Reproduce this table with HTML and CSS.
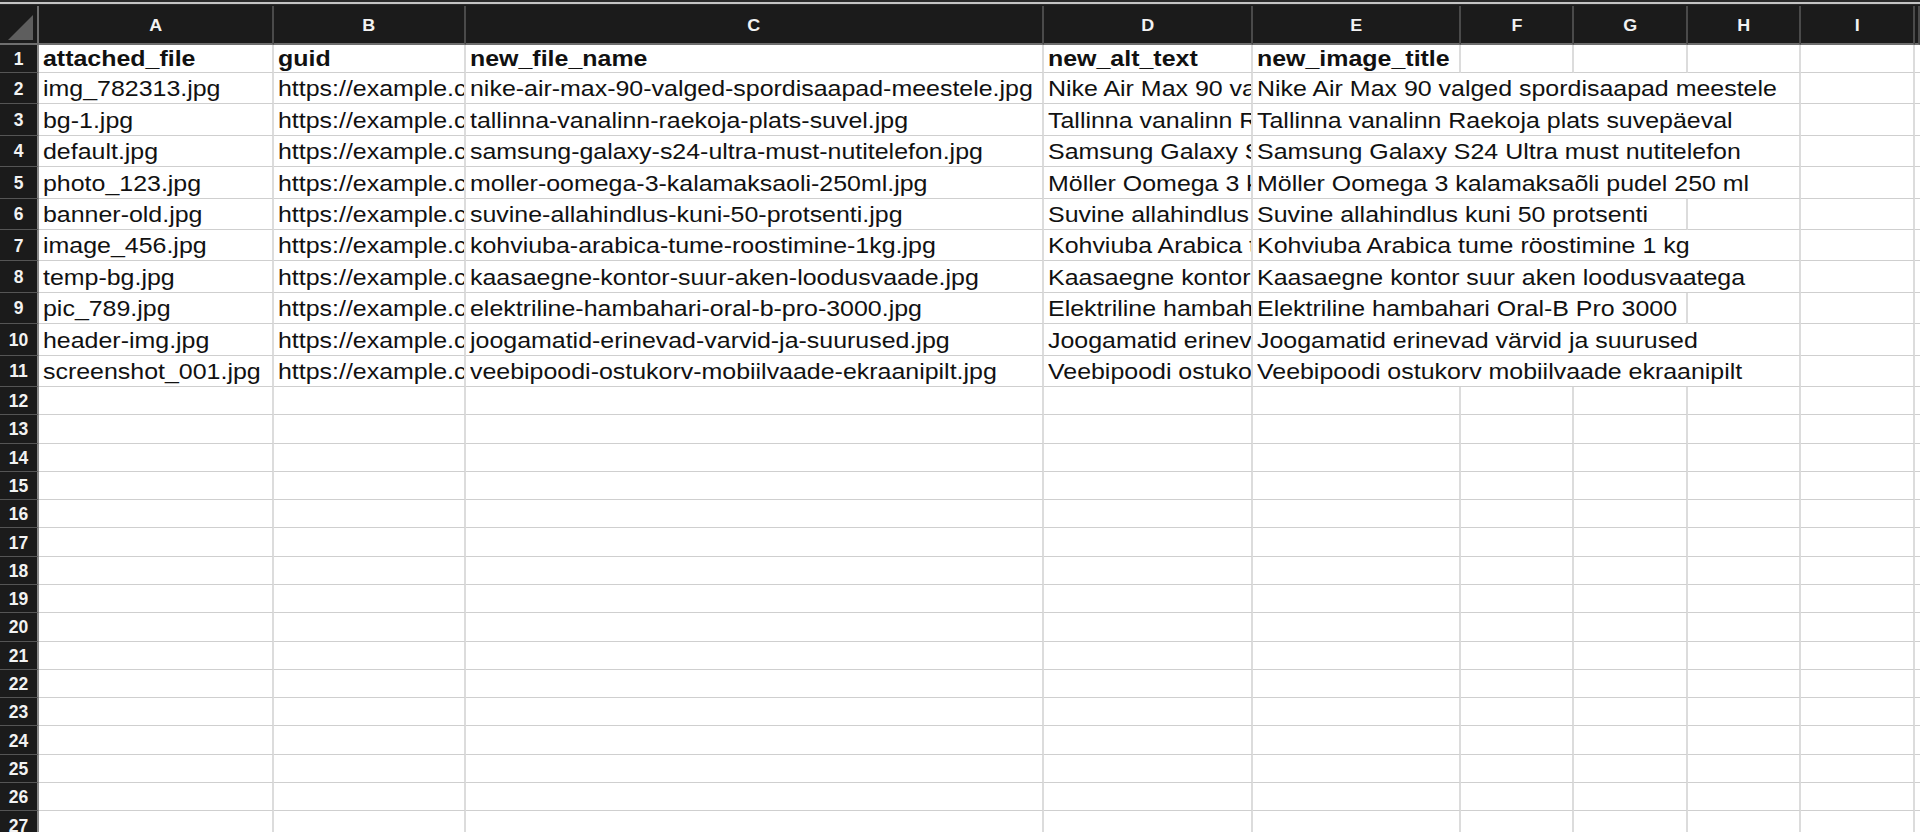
FILE: index.html
```html
<!DOCTYPE html>
<html lang="et">
<head>
<meta charset="utf-8">
<title>Sheet</title>
<link rel="stylesheet" href="styles.css">
</head>
<body>
<div class="sheet">
  <div class="topbar"></div>

  <div class="row head">
    <div class="corner"></div>
    <div class="ch"><span class="l">A</span></div>
    <div class="ch"><span class="l">B</span></div>
    <div class="ch"><span class="l">C</span></div>
    <div class="ch"><span class="l">D</span></div>
    <div class="ch"><span class="l">E</span></div>
    <div class="ch"><span class="l">F</span></div>
    <div class="ch"><span class="l">G</span></div>
    <div class="ch"><span class="l">H</span></div>
    <div class="ch"><span class="l">I</span></div>
    <div class="ch"></div>
  </div>

  <div class="row r1 bold">
    <div class="rn">1</div>
    <div class="c"><span class="t">attached_file</span></div>
    <div class="c"><span class="t">guid</span></div>
    <div class="c"><span class="t">new_file_name</span></div>
    <div class="c"><span class="t">new_alt_text</span></div>
    <div class="c"><span class="t">new_image_title</span></div>
    <div class="c"></div><div class="c"></div><div class="c"></div><div class="c"></div><div class="c"></div>
  </div>

  <div class="row rd">
    <div class="rn">2</div>
    <div class="c"><span class="t">img_782313.jpg</span></div>
    <div class="c"><span class="t">https://example.com/img_782313.jpg</span></div>
    <div class="c"><span class="t">nike-air-max-90-valged-spordisaapad-meestele.jpg</span></div>
    <div class="c"><span class="t">Nike Air Max 90 valged spordisaapad meestele</span></div>
    <div class="c span4"><span class="t">Nike Air Max 90 valged spordisaapad meestele</span></div>
    <div class="c"></div><div class="c"></div>
  </div>

  <div class="row rd">
    <div class="rn">3</div>
    <div class="c"><span class="t">bg-1.jpg</span></div>
    <div class="c"><span class="t">https://example.com/bg-1.jpg</span></div>
    <div class="c"><span class="t">tallinna-vanalinn-raekoja-plats-suvel.jpg</span></div>
    <div class="c"><span class="t">Tallinna vanalinn Raekoja plats suvepäeval</span></div>
    <div class="c span4"><span class="t">Tallinna vanalinn Raekoja plats suvepäeval</span></div>
    <div class="c"></div><div class="c"></div>
  </div>

  <div class="row rd">
    <div class="rn">4</div>
    <div class="c"><span class="t">default.jpg</span></div>
    <div class="c"><span class="t">https://example.com/default.jpg</span></div>
    <div class="c"><span class="t">samsung-galaxy-s24-ultra-must-nutitelefon.jpg</span></div>
    <div class="c"><span class="t">Samsung Galaxy S24 Ultra must nutitelefon</span></div>
    <div class="c span4"><span class="t">Samsung Galaxy S24 Ultra must nutitelefon</span></div>
    <div class="c"></div><div class="c"></div>
  </div>

  <div class="row rd">
    <div class="rn">5</div>
    <div class="c"><span class="t">photo_123.jpg</span></div>
    <div class="c"><span class="t">https://example.com/photo_123.jpg</span></div>
    <div class="c"><span class="t">moller-oomega-3-kalamaksaoli-250ml.jpg</span></div>
    <div class="c"><span class="t">Möller Oomega 3 kalamaksaõli pudel 250 ml</span></div>
    <div class="c span4"><span class="t">Möller Oomega 3 kalamaksaõli pudel 250 ml</span></div>
    <div class="c"></div><div class="c"></div>
  </div>

  <div class="row rd">
    <div class="rn">6</div>
    <div class="c"><span class="t">banner-old.jpg</span></div>
    <div class="c"><span class="t">https://example.com/banner-old.jpg</span></div>
    <div class="c"><span class="t">suvine-allahindlus-kuni-50-protsenti.jpg</span></div>
    <div class="c"><span class="t">Suvine allahindlus kuni 50 protsenti</span></div>
    <div class="c span3"><span class="t">Suvine allahindlus kuni 50 protsenti</span></div>
    <div class="c"></div><div class="c"></div><div class="c"></div>
  </div>

  <div class="row rd">
    <div class="rn">7</div>
    <div class="c"><span class="t">image_456.jpg</span></div>
    <div class="c"><span class="t">https://example.com/image_456.jpg</span></div>
    <div class="c"><span class="t">kohviuba-arabica-tume-roostimine-1kg.jpg</span></div>
    <div class="c"><span class="t">Kohviuba Arabica tume röostimine 1 kg</span></div>
    <div class="c span4"><span class="t">Kohviuba Arabica tume röostimine 1 kg</span></div>
    <div class="c"></div><div class="c"></div>
  </div>

  <div class="row rd">
    <div class="rn">8</div>
    <div class="c"><span class="t">temp-bg.jpg</span></div>
    <div class="c"><span class="t">https://example.com/temp-bg.jpg</span></div>
    <div class="c"><span class="t">kaasaegne-kontor-suur-aken-loodusvaade.jpg</span></div>
    <div class="c"><span class="t">Kaasaegne kontor suur aken loodusvaatega</span></div>
    <div class="c span4"><span class="t">Kaasaegne kontor suur aken loodusvaatega</span></div>
    <div class="c"></div><div class="c"></div>
  </div>

  <div class="row rd">
    <div class="rn">9</div>
    <div class="c"><span class="t">pic_789.jpg</span></div>
    <div class="c"><span class="t">https://example.com/pic_789.jpg</span></div>
    <div class="c"><span class="t">elektriline-hambahari-oral-b-pro-3000.jpg</span></div>
    <div class="c"><span class="t">Elektriline hambahari Oral-B Pro 3000</span></div>
    <div class="c span3"><span class="t">Elektriline hambahari Oral-B Pro 3000</span></div>
    <div class="c"></div><div class="c"></div><div class="c"></div>
  </div>

  <div class="row rd">
    <div class="rn">10</div>
    <div class="c"><span class="t">header-img.jpg</span></div>
    <div class="c"><span class="t">https://example.com/header-img.jpg</span></div>
    <div class="c"><span class="t">joogamatid-erinevad-varvid-ja-suurused.jpg</span></div>
    <div class="c"><span class="t">Joogamatid erinevad värvid ja suurused</span></div>
    <div class="c span4"><span class="t">Joogamatid erinevad värvid ja suurused</span></div>
    <div class="c"></div><div class="c"></div>
  </div>

  <div class="row rd">
    <div class="rn">11</div>
    <div class="c"><span class="t">screenshot_001.jpg</span></div>
    <div class="c"><span class="t">https://example.com/screenshot_001.jpg</span></div>
    <div class="c"><span class="t">veebipoodi-ostukorv-mobiilvaade-ekraanipilt.jpg</span></div>
    <div class="c"><span class="t">Veebipoodi ostukorv mobiilvaade ekraanipilt</span></div>
    <div class="c span4"><span class="t">Veebipoodi ostukorv mobiilvaade ekraanipilt</span></div>
    <div class="c"></div><div class="c"></div>
  </div>

  <div class="row re"><div class="rn">12</div><div class="c"></div><div class="c"></div><div class="c"></div><div class="c"></div><div class="c"></div><div class="c"></div><div class="c"></div><div class="c"></div><div class="c"></div><div class="c"></div></div>
  <div class="row re"><div class="rn">13</div><div class="c"></div><div class="c"></div><div class="c"></div><div class="c"></div><div class="c"></div><div class="c"></div><div class="c"></div><div class="c"></div><div class="c"></div><div class="c"></div></div>
  <div class="row re"><div class="rn">14</div><div class="c"></div><div class="c"></div><div class="c"></div><div class="c"></div><div class="c"></div><div class="c"></div><div class="c"></div><div class="c"></div><div class="c"></div><div class="c"></div></div>
  <div class="row re"><div class="rn">15</div><div class="c"></div><div class="c"></div><div class="c"></div><div class="c"></div><div class="c"></div><div class="c"></div><div class="c"></div><div class="c"></div><div class="c"></div><div class="c"></div></div>
  <div class="row re"><div class="rn">16</div><div class="c"></div><div class="c"></div><div class="c"></div><div class="c"></div><div class="c"></div><div class="c"></div><div class="c"></div><div class="c"></div><div class="c"></div><div class="c"></div></div>
  <div class="row re"><div class="rn">17</div><div class="c"></div><div class="c"></div><div class="c"></div><div class="c"></div><div class="c"></div><div class="c"></div><div class="c"></div><div class="c"></div><div class="c"></div><div class="c"></div></div>
  <div class="row re"><div class="rn">18</div><div class="c"></div><div class="c"></div><div class="c"></div><div class="c"></div><div class="c"></div><div class="c"></div><div class="c"></div><div class="c"></div><div class="c"></div><div class="c"></div></div>
  <div class="row re"><div class="rn">19</div><div class="c"></div><div class="c"></div><div class="c"></div><div class="c"></div><div class="c"></div><div class="c"></div><div class="c"></div><div class="c"></div><div class="c"></div><div class="c"></div></div>
  <div class="row re"><div class="rn">20</div><div class="c"></div><div class="c"></div><div class="c"></div><div class="c"></div><div class="c"></div><div class="c"></div><div class="c"></div><div class="c"></div><div class="c"></div><div class="c"></div></div>
  <div class="row re"><div class="rn">21</div><div class="c"></div><div class="c"></div><div class="c"></div><div class="c"></div><div class="c"></div><div class="c"></div><div class="c"></div><div class="c"></div><div class="c"></div><div class="c"></div></div>
  <div class="row re"><div class="rn">22</div><div class="c"></div><div class="c"></div><div class="c"></div><div class="c"></div><div class="c"></div><div class="c"></div><div class="c"></div><div class="c"></div><div class="c"></div><div class="c"></div></div>
  <div class="row re"><div class="rn">23</div><div class="c"></div><div class="c"></div><div class="c"></div><div class="c"></div><div class="c"></div><div class="c"></div><div class="c"></div><div class="c"></div><div class="c"></div><div class="c"></div></div>
  <div class="row re"><div class="rn">24</div><div class="c"></div><div class="c"></div><div class="c"></div><div class="c"></div><div class="c"></div><div class="c"></div><div class="c"></div><div class="c"></div><div class="c"></div><div class="c"></div></div>
  <div class="row re"><div class="rn">25</div><div class="c"></div><div class="c"></div><div class="c"></div><div class="c"></div><div class="c"></div><div class="c"></div><div class="c"></div><div class="c"></div><div class="c"></div><div class="c"></div></div>
  <div class="row re"><div class="rn">26</div><div class="c"></div><div class="c"></div><div class="c"></div><div class="c"></div><div class="c"></div><div class="c"></div><div class="c"></div><div class="c"></div><div class="c"></div><div class="c"></div></div>
  <div class="row re"><div class="rn">27</div><div class="c"></div><div class="c"></div><div class="c"></div><div class="c"></div><div class="c"></div><div class="c"></div><div class="c"></div><div class="c"></div><div class="c"></div><div class="c"></div></div>
</div>
</body>
</html>
```

FILE: styles.css
```css
html, body {
  margin: 0;
  padding: 0;
  background: #ffffff;
  overflow: hidden;
}

.sheet {
  width: 1920px;
  height: 832px;
  overflow: hidden;
  display: flex;
  flex-direction: column;
  font-family: "Liberation Sans", Arial, Helvetica, sans-serif;
  color: #111111;
}

.topbar {
  flex: none;
  height: 6px;
  box-sizing: border-box;
  background: #2a2a2a;
  border-top: 2px solid #2a2a2a;
  border-bottom: 1px solid #1c1c1c;
}
.topbar::after {
  content: "";
  display: block;
  height: 2px;
  background: #c4c4c4;
}

.row {
  flex: none;
  display: grid;
  grid-template-columns: 39px 235px 192px 578px 209px 208px 113px 114px 113px 114px 1fr;
}

.head { height: 39px; background: #1b1b1b; }
.r1 { height: 28px; }
.rd { height: 31.4px; }
.re { height: 28.3px; }

.corner {
  background: #1b1b1b;
  border-right: 2px solid #6e6e6e;
  border-bottom: 2px solid #6e6e6e;
  box-sizing: border-box;
  position: relative;
}
.corner::after {
  content: "";
  position: absolute;
  left: 8px;
  top: 9px;
  width: 25px;
  height: 25px;
  background: #5e5e5e;
  clip-path: polygon(100% 0, 100% 100%, 0 100%);
}

.ch {
  box-sizing: border-box;
  background: #1b1b1b;
  border-right: 2px solid #4a4a4a;
  border-bottom: 2px solid #6e6e6e;
  display: flex;
  align-items: center;
  justify-content: center;
  color: #f2f2f2;
  font-size: 16px;
  font-weight: bold;
  padding-top: 2px;
}
.ch .l {
  display: inline-block;
  transform: scaleX(1.12);
}

.rn {
  box-sizing: border-box;
  background: #1b1b1b;
  color: #f2f2f2;
  font-size: 17.5px;
  font-weight: bold;
  display: flex;
  align-items: center;
  justify-content: center;
  border-right: 2px solid #8a8a8a;
  border-bottom: 1px solid #555555;
  padding-top: 2px;
}

.c {
  box-sizing: border-box;
  min-width: 0;
  border-right: 2px solid #dcdcdc;
  border-bottom: 1px solid #cfcfcf;
  display: flex;
  align-items: flex-end;
  padding: 0 4px 1px 4px;
  overflow: hidden;
  white-space: nowrap;
  font-size: 21.5px;
  line-height: 24px;
}

.rd .c { padding-bottom: 2px; }

.c .t {
  display: inline-block;
  transform: scaleX(1.16);
  transform-origin: 0 100%;
}

.bold .c { font-weight: bold; }

.span3 { grid-column: span 3; }
.span4 { grid-column: span 4; }
```
